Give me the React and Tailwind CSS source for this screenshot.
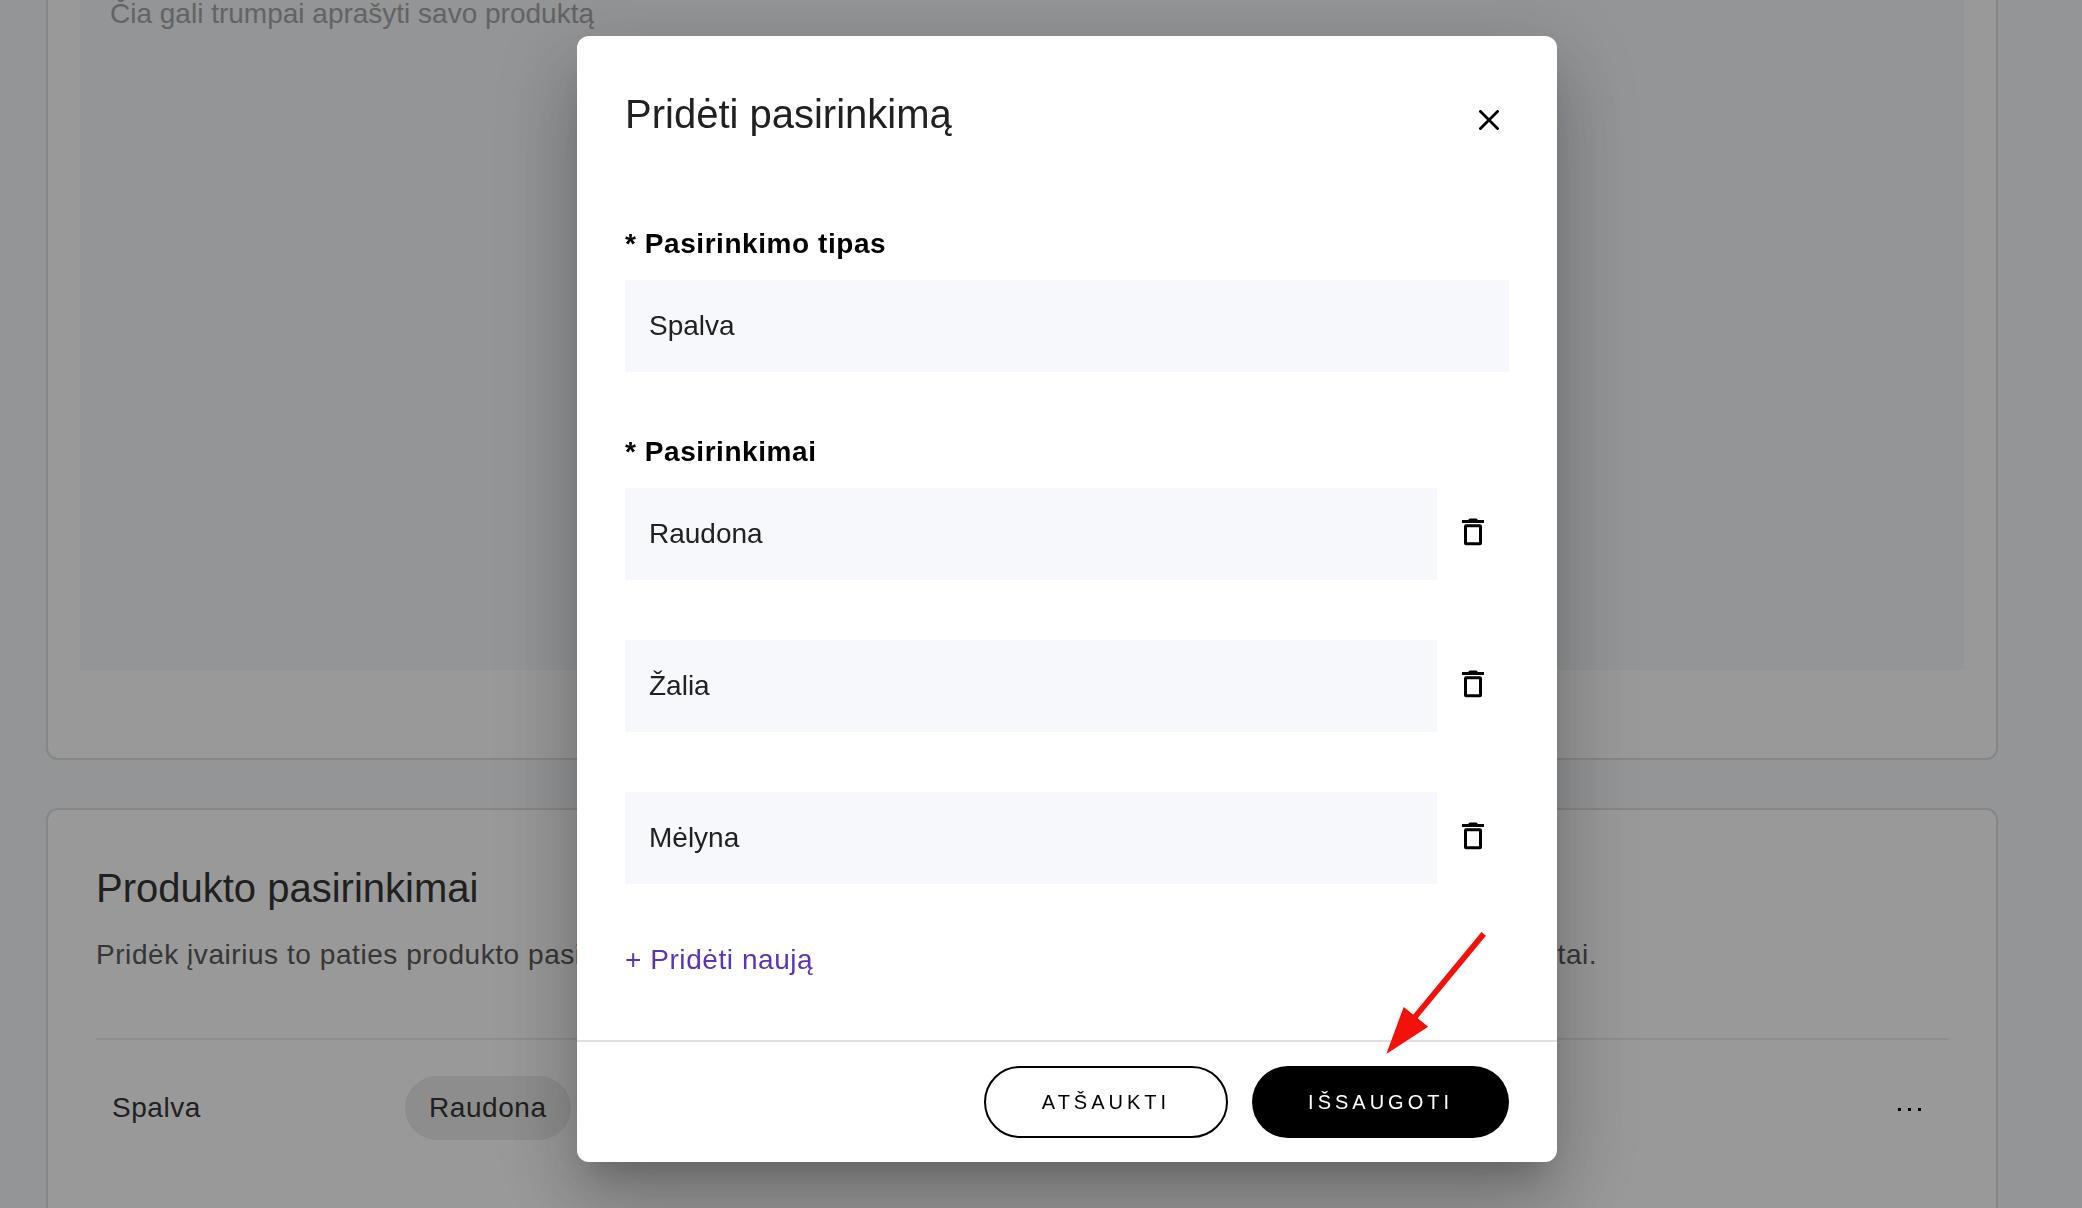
import React, { useState } from 'react';

function CloseIcon() {
  return (
    <svg viewBox="0 0 20 20" className="w-5 h-5" fill="none" stroke="currentColor" strokeWidth="2.8" aria-hidden="true">
      <path d="M0.5 0.5 L19.5 19.5 M19.5 0.5 L0.5 19.5" />
    </svg>
  );
}

function TrashIcon() {
  return (
    <svg viewBox="0 0 22 28" className="w-[22px] h-7" aria-hidden="true">
      <path d="M6 2 L7.5 0.4 H14.5 L16 2 H22 V5 H0 V2 Z" fill="currentColor" />
      <rect x="3.5" y="7.8" width="15" height="18" rx="0.6" fill="none" stroke="currentColor" strokeWidth="3" />
    </svg>
  );
}

function DotsIcon() {
  return (
    <svg viewBox="0 0 24 4" className="w-6 h-1" fill="currentColor" aria-hidden="true">
      <rect x="0" y="0" width="3" height="3" />
      <rect x="10" y="0" width="3" height="3" />
      <rect x="20" y="0" width="3" height="3" />
    </svg>
  );
}

function Arrow() {
  return (
    <svg viewBox="0 0 100 122" className="absolute right-[71px] bottom-[107px] w-[100px] h-[122px] overflow-visible pointer-events-none" aria-hidden="true">
      <path d="M97.7 0.9 L24 90" stroke="#f2110b" strokeWidth="5.8" />
      <path d="M0.3 121 L17.7 74 L42.2 93.7 Z" fill="#f2110b" />
    </svg>
  );
}

function ProductPage({ type, options }) {
  return (
    <main className="flex flex-col gap-12 h-screen overflow-hidden pl-[46px] pr-[84px] bg-[#f6f8fc]">
      <section className="shrink-0 h-[760px] px-8 bg-white border-2 border-t-0 border-[#e0e0e0] rounded-b-xl">
        <textarea
          aria-label="Produkto aprašymas"
          placeholder="Čia gali trumpai aprašyti savo produktą"
          className="block w-full h-[670px] px-[30px] resize-none bg-[#f6f8fc] text-[28px] leading-7 placeholder:text-[#a6a6a6] outline-none"
        />
      </section>

      <section className="shrink-0 h-[600px] p-12 bg-white border-2 border-[#e0e0e0] rounded-xl">
        <h2 className="text-[40px] leading-[60px] text-[#363636]">Produkto pasirinkimai</h2>
        <p className="mt-4 text-[28px] leading-[42px] tracking-[0.02em] whitespace-nowrap text-[#5a5a5a]">
          Pridėk įvairius to paties produkto pasirinkimus, kuriuos galės rinktis pirkėjai – dydžiai, spalvos ar kiti galimi variantai.
        </p>
        <div className="flex items-center mt-[62px] pt-9 px-4 border-t-2 border-[#ececec] text-[28px] leading-10 tracking-[0.02em] text-[#363636]">
          <span className="w-[293px]">{type}</span>
          <div className="flex flex-1 gap-4">
            {options.map((option) => (
              <span key={option} className="px-6 py-3 rounded-full bg-[#ececec]">{option}</span>
            ))}
          </div>
          <button type="button" aria-label="Daugiau" className="px-2.5 pt-3 pb-2 text-black">
            <DotsIcon />
          </button>
        </div>
      </section>
    </main>
  );
}

function OptionRow({ value, onChange, onRemove }) {
  return (
    <div className="flex items-center">
      <input
        aria-label="Pasirinkimas"
        value={value}
        onChange={(e) => onChange(e.target.value)}
        className="flex-1 h-[92px] px-6 bg-[#f6f8fc] text-[28px] text-[#212121] outline-none"
      />
      <button type="button" aria-label="Ištrinti" onClick={onRemove} className="flex justify-center w-[72px] pb-1 text-black">
        <TrashIcon />
      </button>
    </div>
  );
}

export default function App() {
  const [type, setType] = useState('Spalva');
  const [options, setOptions] = useState(['Raudona', 'Žalia', 'Mėlyna']);

  const change = (index, value) => setOptions(options.map((o, i) => (i === index ? value : o)));
  const remove = (index) => setOptions(options.filter((_, i) => i !== index));

  return (
    <div className="font-['Liberation_Sans',Arial,sans-serif]">
      <ProductPage type="Spalva" options={['Raudona', 'Žalia', 'Mėlyna']} />

      <div className="fixed inset-0 flex items-start justify-center pt-9 pl-[52px] bg-black/40">
        <div
          role="dialog"
          aria-labelledby="dialog-title"
          className="relative w-[980px] max-w-full bg-white rounded-xl shadow-[0_22px_30px_-14px_rgba(0,0,0,0.2),0_48px_76px_6px_rgba(0,0,0,0.14),0_18px_92px_16px_rgba(0,0,0,0.12)]"
        >
          <div className="px-12 pt-12 pb-[60px]">
            <header className="flex items-center justify-between">
              <h1 id="dialog-title" className="text-[40px] leading-[60px] text-[#212121]">Pridėti pasirinkimą</h1>
              <button type="button" aria-label="Uždaryti" className="p-2.5 pt-[22px] text-black">
                <CloseIcon />
              </button>
            </header>

            <label htmlFor="option-type" className="block mt-20 text-[28px] leading-10 font-bold tracking-[0.02em] text-black">
              * Pasirinkimo tipas
            </label>
            <input
              id="option-type"
              value={type}
              onChange={(e) => setType(e.target.value)}
              className="block w-full h-[92px] mt-4 px-6 bg-[#f6f8fc] text-[28px] text-[#212121] outline-none"
            />

            <fieldset>
              <legend className="pt-[60px] text-[28px] leading-10 font-bold tracking-[0.02em] text-black">* Pasirinkimai</legend>
              <div className="flex flex-col gap-[60px] mt-4">
                {options.map((option, i) => (
                  <OptionRow key={i} value={option} onChange={(v) => change(i, v)} onRemove={() => remove(i)} />
                ))}
              </div>
            </fieldset>

            <button
              type="button"
              onClick={() => setOptions([...options, ''])}
              className="block mt-14 text-[28px] leading-10 tracking-[0.02em] text-[#5a35b5]"
            >
              + Pridėti naują
            </button>
          </div>

          <footer className="flex justify-end gap-6 px-12 py-6 border-t-2 border-[#e0e0e0]">
            <button type="button" className="h-[72px] px-14 border-2 border-black rounded-full text-[20px] tracking-[4px] text-black">
              ATŠAUKTI
            </button>
            <button type="button" className="h-[72px] px-14 rounded-full bg-black text-[20px] tracking-[4px] text-white">
              IŠSAUGOTI
            </button>
          </footer>

          <Arrow />
        </div>
      </div>
    </div>
  );
}
